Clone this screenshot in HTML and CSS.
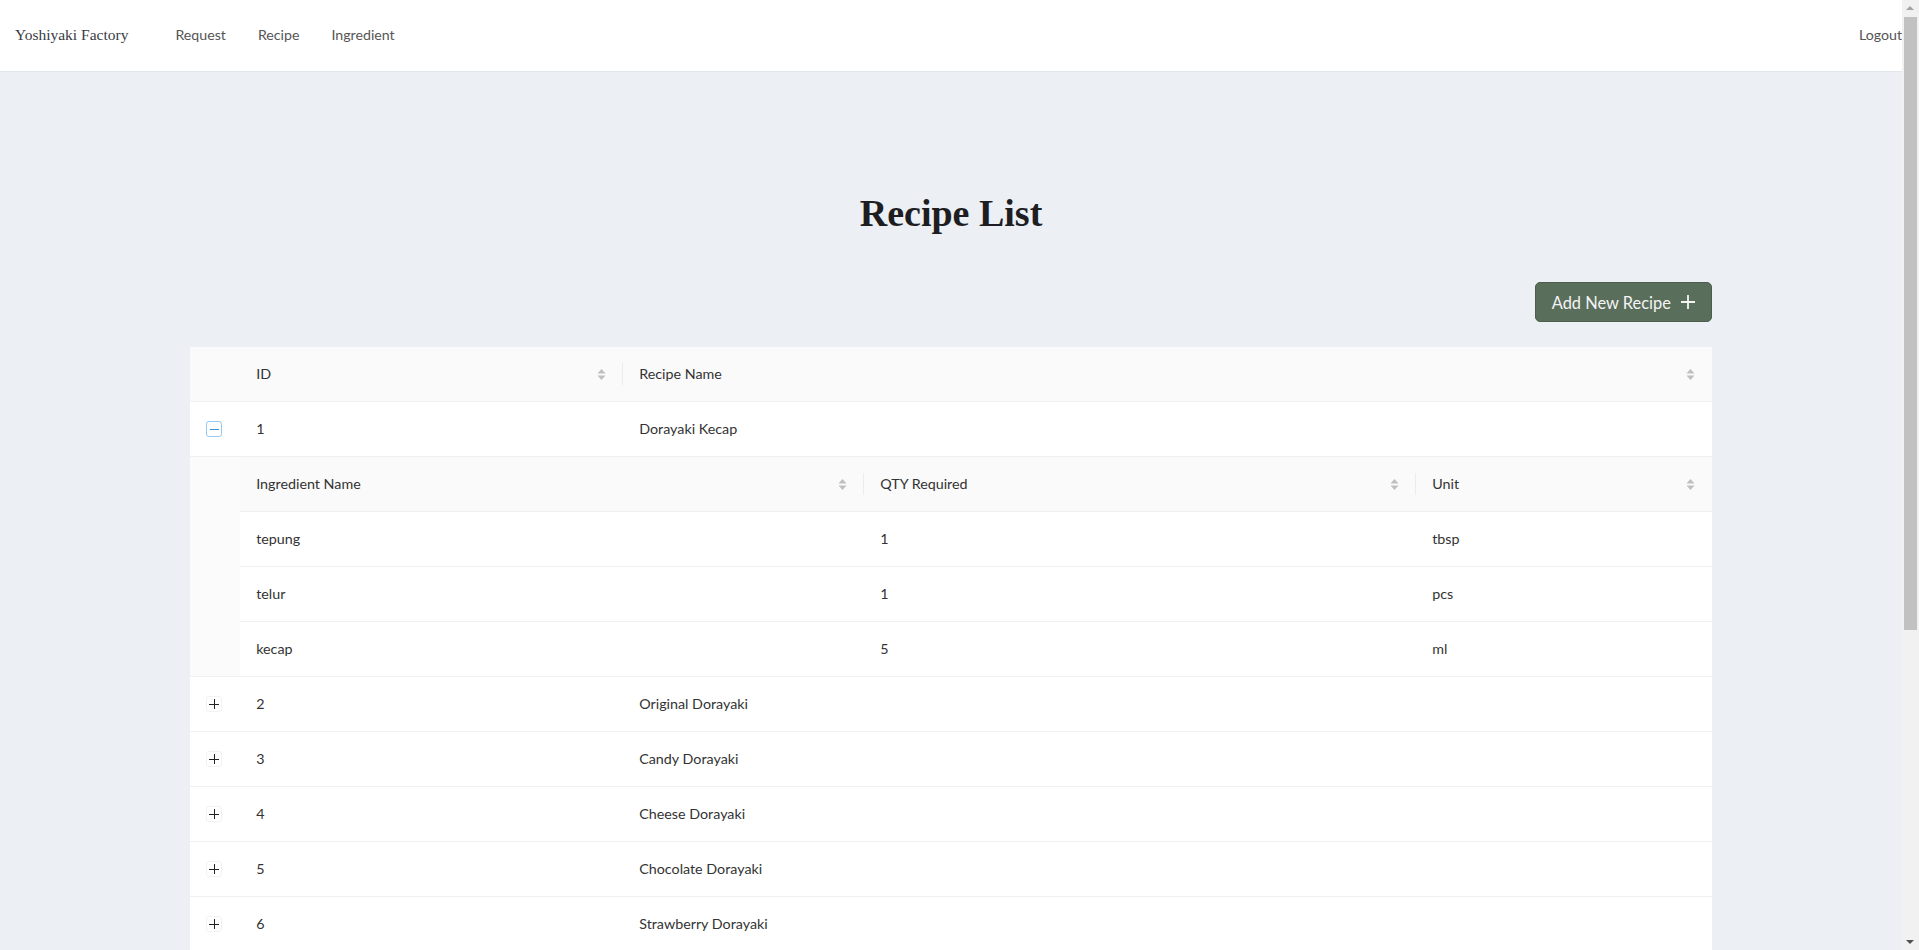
FILE: index.html
```html
<!DOCTYPE html>
<html lang="en">
<head>
<meta charset="utf-8">
<title>Recipe List</title>
<link rel="stylesheet" href="styles.css">
</head>
<body>
<div class="page">
<header class="navbar">
  <a class="brand" href="#">Yoshiyaki Factory</a>
  <nav class="nav-links">
    <a href="#">Request</a>
    <a href="#">Recipe</a>
    <a href="#">Ingredient</a>
  </nav>
  <a class="logout" href="#">Logout</a>
</header>

<main class="content">
  <h1 class="page-title">Recipe List</h1>
  <div class="panel">
    <div class="toolbar">
      <button class="btn-add" type="button">Add New Recipe
        <svg class="plus" width="16" height="16" viewBox="0 0 16 16"><path d="M8 1v14M1 8h14" stroke="currentColor" stroke-width="1.8" fill="none"/></svg>
      </button>
    </div>

    <table class="tbl main-tbl">
      <colgroup><col class="c-exp"><col class="c-id"><col></colgroup>
      <thead>
        <tr>
          <th></th>
          <th class="sortable div"><div class="th-in"><span>ID</span><svg class="sorter" width="9" height="13" viewBox="0 0 9 13"><path d="M4.5 1 8.5 5.5H0.5Z M4.5 12 8.5 7.5H0.5Z" fill="#bfbfbf"/></svg></div></th>
          <th class="sortable"><div class="th-in"><span>Recipe Name</span><svg class="sorter" width="9" height="13" viewBox="0 0 9 13"><path d="M4.5 1 8.5 5.5H0.5Z M4.5 12 8.5 7.5H0.5Z" fill="#bfbfbf"/></svg></div></th>
        </tr>
      </thead>
      <tbody>
        <tr>
          <td class="exp-cell"><button class="exp-btn open" type="button" aria-label="Collapse row"></button></td>
          <td>1</td>
          <td>Dorayaki Kecap</td>
        </tr>
        <tr class="expanded">
          <td colspan="3">
            <div class="sub-wrap">
              <table class="tbl sub-tbl">
                <colgroup><col class="c-ing"><col class="c-qty"><col></colgroup>
                <thead>
                  <tr>
                    <th class="sortable div"><div class="th-in"><span>Ingredient Name</span><svg class="sorter" width="9" height="13" viewBox="0 0 9 13"><path d="M4.5 1 8.5 5.5H0.5Z M4.5 12 8.5 7.5H0.5Z" fill="#bfbfbf"/></svg></div></th>
                    <th class="sortable div"><div class="th-in"><span>QTY Required</span><svg class="sorter" width="9" height="13" viewBox="0 0 9 13"><path d="M4.5 1 8.5 5.5H0.5Z M4.5 12 8.5 7.5H0.5Z" fill="#bfbfbf"/></svg></div></th>
                    <th class="sortable"><div class="th-in"><span>Unit</span><svg class="sorter" width="9" height="13" viewBox="0 0 9 13"><path d="M4.5 1 8.5 5.5H0.5Z M4.5 12 8.5 7.5H0.5Z" fill="#bfbfbf"/></svg></div></th>
                  </tr>
                </thead>
                <tbody>
                  <tr><td>tepung</td><td>1</td><td>tbsp</td></tr>
                  <tr><td>telur</td><td>1</td><td>pcs</td></tr>
                  <tr><td>kecap</td><td>5</td><td>ml</td></tr>
                </tbody>
              </table>
            </div>
          </td>
        </tr>
        <tr><td class="exp-cell"><button class="exp-btn" type="button" aria-label="Expand row"></button></td><td>2</td><td>Original Dorayaki</td></tr>
        <tr><td class="exp-cell"><button class="exp-btn" type="button" aria-label="Expand row"></button></td><td>3</td><td>Candy Dorayaki</td></tr>
        <tr><td class="exp-cell"><button class="exp-btn" type="button" aria-label="Expand row"></button></td><td>4</td><td>Cheese Dorayaki</td></tr>
        <tr><td class="exp-cell"><button class="exp-btn" type="button" aria-label="Expand row"></button></td><td>5</td><td>Chocolate Dorayaki</td></tr>
        <tr><td class="exp-cell"><button class="exp-btn" type="button" aria-label="Expand row"></button></td><td>6</td><td>Strawberry Dorayaki</td></tr>
        <tr><td class="exp-cell"><button class="exp-btn" type="button" aria-label="Expand row"></button></td><td>7</td><td>Matcha Dorayaki</td></tr>
        <tr><td class="exp-cell"><button class="exp-btn" type="button" aria-label="Expand row"></button></td><td>8</td><td>Banana Dorayaki</td></tr>
        <tr><td class="exp-cell"><button class="exp-btn" type="button" aria-label="Expand row"></button></td><td>9</td><td>Custard Dorayaki</td></tr>
        <tr><td class="exp-cell"><button class="exp-btn" type="button" aria-label="Expand row"></button></td><td>10</td><td>Honey Dorayaki</td></tr>
      </tbody>
    </table>

    <div class="pagination">
      <span class="pg-item pg-arrow">&lsaquo;</span>
      <span class="pg-item pg-active">1</span>
      <span class="pg-item">2</span>
      <span class="pg-item pg-arrow">&rsaquo;</span>
    </div>
  </div>
</main>
</div>

<div class="scrollbar" aria-hidden="true">
  <span class="sb-arrow sb-up"></span>
  <span class="sb-thumb"></span>
  <span class="sb-arrow sb-down"></span>
</div>
</body>
</html>
```

FILE: styles.css
```css
html, body {
  margin: 0;
  padding: 0;
}

body {
  background: #ecf0f4;
  font-family: Lato, "Open Sans", "Liberation Sans", sans-serif;
  font-size: 14px;
  color: #333;
}

.page {
  margin-right: 17px;
}

a {
  text-decoration: none;
  color: inherit;
}

/* decorative replica of the window scrollbar */
.scrollbar {
  position: fixed;
  top: 0;
  right: 0;
  bottom: 0;
  width: 17px;
  background: #f1f1f1;
  display: flex;
  flex-direction: column;
  align-items: center;
}

.sb-arrow {
  flex: 0 0 17px;
  width: 17px;
  position: relative;
}

.sb-arrow::before {
  content: "";
  position: absolute;
  left: 4px;
  border-left: 4px solid transparent;
  border-right: 4px solid transparent;
}

.sb-up::before {
  top: 6px;
  border-bottom: 4px solid #a3a3a3;
}

.sb-down::before {
  bottom: 6px;
  border-top: 4px solid #505050;
}

.sb-thumb {
  width: 13px;
  height: 613px;
  background: #c1c1c1;
}

.sb-down {
  margin-top: auto;
}

.navbar {
  display: flex;
  align-items: center;
  height: 69px;
  padding: 0 0 2px 15px;
  background: #fff;
  border-bottom: 1px solid #e2e7ec;
}

.brand {
  font-family: "Liberation Serif", "DejaVu Serif", serif;
  font-size: 15.5px;
  color: #3a3a44;
  margin-right: 47px;
}

.nav-links {
  display: flex;
  gap: 32px;
}

.nav-links a,
.logout {
  font-size: 14.2px;
  color: #555;
}

.logout {
  margin-left: auto;
}

.content {
  padding: 117px 0 120px;
}

.page-title {
  margin: 0;
  text-align: center;
  font-family: "Liberation Serif", "DejaVu Serif", serif;
  font-weight: 700;
  font-size: 38px;
  line-height: 48px;
  color: #1e1e22;
}

.panel {
  width: 80%;
  margin: 0 auto;
}

.toolbar {
  display: flex;
  justify-content: flex-end;
  margin-top: 45px;
  margin-bottom: 25px;
}

.btn-add {
  display: flex;
  align-items: center;
  gap: 9px;
  height: 40px;
  padding: 0 15px 0 16px;
  background: #5a6e5c;
  border: 1px solid #4b5d4d;
  border-radius: 5px;
  color: #f4f4f4;
  font-family: Lato, "Open Sans", sans-serif;
  font-size: 16.4px;
  cursor: pointer;
}

.plus {
  display: block;
}

.tbl {
  width: 100%;
  border-collapse: collapse;
  table-layout: fixed;
  background: #fff;
}

.c-exp { width: 50px; }
.c-id { width: 383px; }
.c-ing { width: 624px; }
.c-qty { width: 552px; }

.tbl th,
.tbl td {
  padding: 16px;
  line-height: 22px;
  font-size: 14.3px;
  text-align: left;
  border-bottom: 1px solid #f0f0f0;
  color: #333;
}

.tbl th {
  background: #fafafa;
  font-weight: 400;
  position: relative;
}

.th-in {
  display: flex;
  align-items: center;
  justify-content: space-between;
}

.sorter {
  display: block;
  margin-right: 1px;
}

.tbl th.div::after {
  content: "";
  position: absolute;
  right: 0;
  top: 50%;
  width: 1px;
  height: 22px;
  transform: translateY(-50%);
  background: #ececec;
}

.exp-cell {
  padding: 16px 0 16px 18px;
}

.exp-btn {
  position: relative;
  display: block;
  width: 16px;
  height: 16px;
  padding: 0;
  background: #fff;
  border: 1px solid #f2f2f2;
  border-radius: 3px;
  cursor: pointer;
}

.exp-btn::before,
.exp-btn::after {
  content: "";
  position: absolute;
  background: #222;
}

.exp-btn::before {
  left: 2px;
  right: 2px;
  top: 7px;
  height: 1px;
}

.exp-btn::after {
  top: 2px;
  bottom: 2px;
  left: 7px;
  width: 1px;
}

.exp-btn.open {
  border: 1.5px solid #96c8f2;
}

.exp-btn.open::before {
  left: 2.5px;
  right: 2.5px;
  top: 6.5px;
  background: #3d8fd8;
}

.exp-btn.open::after {
  display: none;
}

.expanded > td {
  padding: 0;
  background: #fbfbfb;
}

.sub-wrap {
  padding-left: 50px;
}

.sub-tbl tbody tr:last-child td {
  border-bottom: 0;
}

.pagination {
  display: flex;
  justify-content: flex-end;
  gap: 8px;
  margin: 16px 0;
}

.pg-item {
  display: flex;
  align-items: center;
  justify-content: center;
  min-width: 32px;
  height: 32px;
  border-radius: 6px;
  font-size: 14px;
  color: #333;
}

.pg-active {
  background: #fff;
  border: 1px solid #5a6e5c;
  color: #5a6e5c;
  box-sizing: border-box;
}
```
